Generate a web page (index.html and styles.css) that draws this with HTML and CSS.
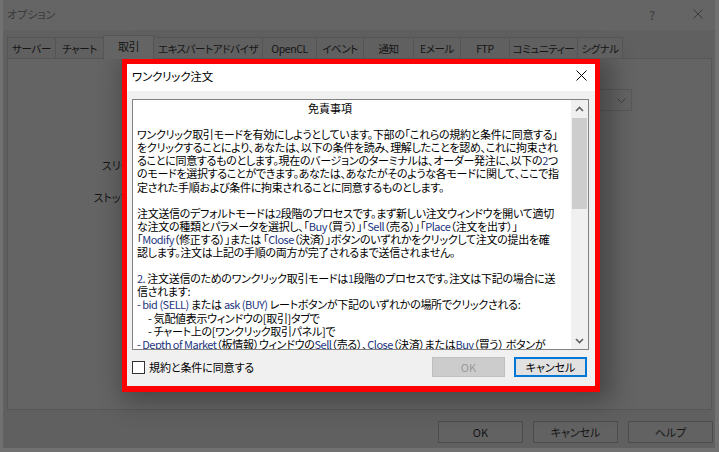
FILE: index.html
```html
<!DOCTYPE html>
<html lang="ja">
<head>
<meta charset="utf-8">
<title>オプション</title>
<link rel="stylesheet" href="styles.css">
</head>
<body>
<div class="window">
  <div class="titlebar">
    <span class="wtitle">オプション</span>
    <div class="caps">
      <span class="help">?</span>
      <svg class="wclose" width="10" height="10" viewBox="0 0 10 10"><path d="M0.5 0.5L9.5 9.5M9.5 0.5L0.5 9.5"/></svg>
    </div>
  </div>
  <div class="content">
    <div class="tabs">
      <div class="tab t-server">サーバー</div>
      <div class="tab t-chart">チャート</div>
      <div class="tab sel t-trade">取引</div>
      <div class="tab t-ea">エキスパートアドバイザ</div>
      <div class="tab t-ocl">OpenCL</div>
      <div class="tab t-event">イベント</div>
      <div class="tab t-notify">通知</div>
      <div class="tab t-mail">Eメール</div>
      <div class="tab t-ftp">FTP</div>
      <div class="tab t-comm">コミュニティー</div>
      <div class="tab t-signal">シグナル</div>
    </div>
    <div class="panel">
      <div class="select">
        <svg class="chev" width="9" height="5" viewBox="0 0 9 5"><path d="M0.5 0.5L4.5 4.5L8.5 0.5"/></svg>
      </div>
      <div class="form">
        <div class="flabel">スリッページ:</div>
        <div class="flabel">ストップレベル:</div>
      </div>
    </div>
    <div class="buttons">
      <button class="wbtn">OK</button>
      <button class="wbtn">キャンセル</button>
      <button class="wbtn">ヘルプ</button>
    </div>
  </div>
</div>

<div class="modal">
  <div class="mtitle">
    <span>ワンクリック注文</span>
    <svg class="mclose" width="11" height="11" viewBox="0 0 11 11"><path d="M0.5 0.5L10.5 10.5M10.5 0.5L0.5 10.5"/></svg>
  </div>
  <div class="mbody">
    <div class="textbox">
      <div class="text">
        <div class="line head">免責事項</div>
        <div class="line"></div>
        <div class="line">ワンクリック取引モードを有効にしようとしています。下部の「これらの規約と条件に同意する」</div>
        <div class="line">をクリックすることにより、あなたは、以下の条件を読み、理解したことを認め、これに拘束され</div>
        <div class="line">ることに同意するものとします。現在のバージョンのターミナルは、オーダー発注に、以下の<span class="en">2</span>つ</div>
        <div class="line">のモードを選択することができます。あなたは、あなたがそのような各モードに関して、ここで指</div>
        <div class="line">定された手順および条件に拘束されることに同意するものとします。</div>
        <div class="line"></div>
        <div class="line">注文送信のデフォルトモードは<span class="en">2</span>段階のプロセスです。まず新しい注文ウィンドウを開いて適切</div>
        <div class="line">な注文の種類とパラメータを選択し、「<span class="en">Buy</span>（買う）」「<span class="en">Sell</span>（売る）」「<span class="en">Place</span>（注文を出す）」</div>
        <div class="line">「<span class="en">Modify</span>（修正する）」または 「<span class="en">Close</span>（決済）」ボタンのいずれかをクリックして注文の提出を確</div>
        <div class="line">認します。注文は上記の手順の両方が完了されるまで送信されません。</div>
        <div class="line"></div>
        <div class="line"><span class="en">2.</span> 注文送信のためのワンクリック取引モードは<span class="en">1</span>段階のプロセスです。注文は下記の場合に送</div>
        <div class="line">信されます:</div>
        <div class="line"><span class="en">- bid (SELL)</span> または <span class="en">ask (BUY)</span> レートボタンが下記のいずれかの場所でクリックされる:</div>
        <div class="line sub">- 気配値表示ウィンドウの[取引]タブで</div>
        <div class="line sub">- チャート上の[ワンクリック取引パネル]で</div>
        <div class="line"><span class="en">- Depth of Market</span>（板情報）ウィンドウの<span class="en">Sell</span>（売る）、<span class="en">Close</span>（決済）または<span class="en">Buy</span>（買う） ボタンが</div>
      </div>
      <div class="scrollbar">
        <div class="sb-btn"><svg width="9" height="6" viewBox="0 0 9 6"><path d="M1 5L4.5 1.5L8 5"/></svg></div>
        <div class="sb-track"><div class="sb-thumb"></div></div>
        <div class="sb-btn"><svg width="9" height="6" viewBox="0 0 9 6"><path d="M1 1L4.5 4.5L8 1"/></svg></div>
      </div>
    </div>
    <div class="mfoot">
      <label class="agree"><span class="cb"></span>規約と条件に同意する</label>
      <div class="mbtns">
        <button class="btn disabled">OK</button>
        <button class="btn primary">キャンセル</button>
      </div>
    </div>
  </div>
</div>
</body>
</html>
```

FILE: styles.css
```css
* { box-sizing: border-box; margin: 0; padding: 0; }

html, body { width: 719px; height: 452px; overflow: hidden; }

body {
  background: #717171;
  font-family: "Noto Sans CJK JP", "Noto Sans", sans-serif;
  font-size: 11px;
  font-feature-settings: "palt";
  color: #151515;
}

/* ---------- dimmed options window ---------- */
.window {
  margin-left: 3px;
  width: 712px;
  height: 448px;
  background: #606060;
  display: flex;
  flex-direction: column;
}

.titlebar {
  height: 30px;
  flex: none;
  background: #656565;
  display: flex;
  align-items: center;
  padding: 0 12px 2px 4px;
  color: #3a3a3a;
  font-size: 11px;
}

.caps {
  margin-left: auto;
  display: flex;
  align-items: center;
  gap: 38px;
}

.help { font-size: 12px; color: #3a3a3a; }

.wclose path { stroke: #3a3a3a; stroke-width: 1; fill: none; }

.content {
  flex: 1;
  display: flex;
  flex-direction: column;
  padding: 5px 3px 0 4px;
}

.tabs {
  height: 24px;
  display: flex;
  align-items: flex-end;
  margin-bottom: -1px;
  position: relative;
  z-index: 1;
}

.tab {
  height: 22px;
  margin-right: -1px;
  border: 1px solid #555;
  background: #606060;
  display: flex;
  align-items: center;
  justify-content: center;
  white-space: nowrap;
  color: #151515;
  font-size: 10.5px;
  letter-spacing: -0.4px;
}

.tab.sel {
  height: 24px;
  border-bottom: none;
  background: #646464;
  padding-bottom: 3px;
  position: relative;
  z-index: 2;
  font-size: 11px;
}

.t-server { width: 49px; }
.t-chart { width: 49px; }
.t-trade { width: 51px; }
.t-ea { width: 110px; }
.t-ocl { width: 55px; }
.t-event { width: 48px; }
.t-notify { width: 51px; }
.t-mail { width: 48px; }
.t-ftp { width: 50px; }
.t-comm { width: 69px; }
.t-signal { width: 46px; }

.panel {
  height: 352px;
  flex: none;
  border: 1px solid #575757;
  background: #646464;
  display: flex;
  flex-direction: column;
}

.select {
  align-self: flex-end;
  margin: 30px 79px 0 0;
  width: 230px;
  height: 22px;
  border: 1px solid #595959;
  display: flex;
  align-items: center;
  justify-content: flex-end;
  padding-right: 5px;
}

.chev path { stroke: #404040; stroke-width: 1; fill: none; }

.form {
  width: 157px;
  margin-top: 38px;
  text-align: right;
}

.flabel { line-height: 32px; white-space: nowrap; }

.buttons {
  margin-top: 11px;
  margin-right: -1px;
  display: flex;
  justify-content: flex-end;
  gap: 10px;
}

.wbtn {
  width: 85px;
  height: 22px;
  background: #626262;
  border: 1px solid #4c4c4c;
  font: inherit;
  color: #151515;
}

/* ---------- modal dialog ---------- */
.modal {
  position: absolute;
  left: 122px;
  top: 59px;
  width: 478px;
  height: 333px;
  border: 5px solid #ff0000;
  border-bottom-width: 6px;
  background: #f0f0f0;
  box-shadow: 6px 4px 24px 6px rgba(0, 0, 0, 0.3);
  display: flex;
  flex-direction: column;
  color: #000;
}

.mtitle {
  height: 27px;
  flex: none;
  background: #fff;
  display: flex;
  align-items: center;
  justify-content: space-between;
  padding: 0 8px 4px 5px;
  font-size: 11.5px;
  letter-spacing: -0.2px;
}

.mclose path { stroke: #000; stroke-width: 1; fill: none; }

.mbody {
  flex: 1;
  padding: 8px 6px 0 5px;
  display: flex;
  flex-direction: column;
}

.textbox {
  height: 251px;
  flex: none;
  border: 1px solid #828282;
  background: #fff;
  display: flex;
}

.text {
  flex: 1;
  padding: 2px 0 0 4px;
  overflow: hidden;
  line-height: 13.1px;
  white-space: nowrap;
  letter-spacing: -0.3px;
}

.line { height: 13.1px; }

.line.head { padding-right: 48px; text-align: center; letter-spacing: 0; }

.line.sub { padding-left: 11px; }

.en { color: #22357e; letter-spacing: -0.5px; }

.scrollbar {
  width: 17px;
  flex: none;
  background: #f0f0f0;
  display: flex;
  flex-direction: column;
}

.sb-btn {
  height: 17px;
  flex: none;
  display: flex;
  align-items: center;
  justify-content: center;
}

.sb-btn path { stroke: #606060; stroke-width: 1.6; fill: none; }

.sb-track { flex: 1; padding: 1px 1px 0 1px; }

.sb-thumb { height: 91px; background: #cdcdcd; }

.mfoot {
  margin-top: 7px;
  margin-right: 2px;
  height: 20px;
  display: flex;
  align-items: center;
}

.agree {
  display: flex;
  align-items: center;
  gap: 4px;
  font-size: 11px;
  letter-spacing: -0.1px;
}

.cb {
  width: 13px;
  height: 13px;
  border: 1px solid #333;
  background: #fff;
}

.mbtns {
  margin-left: auto;
  display: flex;
  gap: 9px;
}

.btn {
  width: 73px;
  height: 20px;
  font: inherit;
}

.btn.disabled {
  background: #cccccc;
  border: 1px solid #bfbfbf;
  color: #9a9a9a;
}

.btn.primary {
  background: #e1e1e1;
  border: 2px solid #0078d7;
  color: #000;
}
```
